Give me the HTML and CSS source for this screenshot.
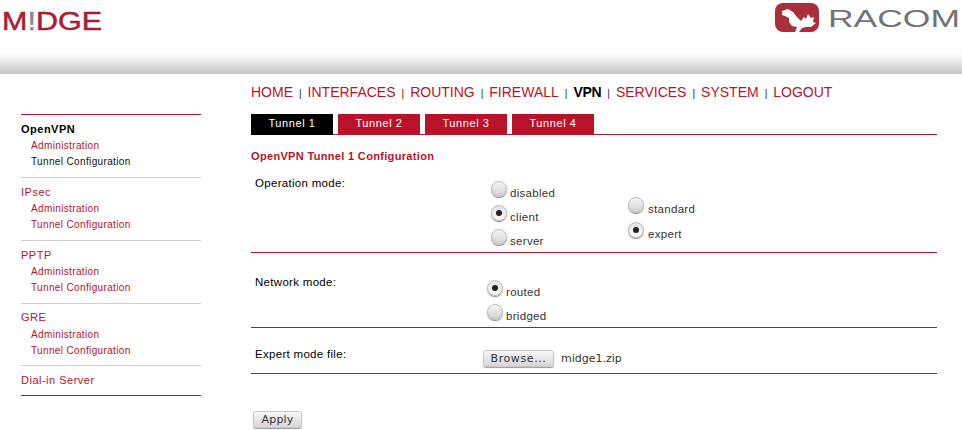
FILE: index.html
```html
<!DOCTYPE html>
<html>
<head>
<meta charset="utf-8">
<title>M!DGE</title>
<link rel="stylesheet" href="styles.css">
</head>
<body>
<header class="top">
  <svg class="logo-midge" width="104" height="38" viewBox="0 0 104 38">
    <text class="midge-text" x="2" y="30" textLength="100" lengthAdjust="spacingAndGlyphs">M<tspan class="bang">!</tspan>DGE</text>
  </svg>
  <div class="logo-racom">
    <svg class="leaf" width="44" height="29" viewBox="0 0 44 29">
      <rect x="0" y="0" width="44" height="29" rx="8" fill="#a92f3a"/>
      <path d="M7 8 L13 6 L18 9 L22 14 L26 18 L29 14 L31 16 L33 11 L36 15 L39 14 L38 19 L41 20 L36 24 L31 24 L27 25 L24 29 L20 29 L22 24 L17 23 L14 19 L14 15 L10 13 L7 12 Z" fill="#fff"/>
    </svg>
    <svg class="racom" width="134" height="30" viewBox="0 0 134 30">
      <text class="racom-text" x="0" y="24" textLength="132" lengthAdjust="spacingAndGlyphs">RACOM</text>
    </svg>
  </div>
</header>
<div class="band"></div>
<div class="page">
  <aside class="side">
    <section class="group">
      <div class="head on">OpenVPN</div>
      <a class="sub">Administration</a>
      <a class="sub on-sub">Tunnel Configuration</a>
    </section>
    <section class="group">
      <div class="head">IPsec</div>
      <a class="sub">Administration</a>
      <a class="sub">Tunnel Configuration</a>
    </section>
    <section class="group">
      <div class="head">PPTP</div>
      <a class="sub">Administration</a>
      <a class="sub">Tunnel Configuration</a>
    </section>
    <section class="group gre">
      <div class="head">GRE</div>
      <a class="sub">Administration</a>
      <a class="sub">Tunnel Configuration</a>
    </section>
    <section class="group last">
      <div class="head">Dial-in Server</div>
    </section>
  </aside>
  <main class="main">
    <nav class="nav">
      <a>HOME</a><i>|</i><a>INTERFACES</a><i>|</i><a>ROUTING</a><i>|</i><a>FIREWALL</a><i>|</i><a class="cur">VPN</a><i>|</i><a>SERVICES</a><i>|</i><a>SYSTEM</a><i>|</i><a>LOGOUT</a>
    </nav>
    <div class="tabs">
      <a class="tab cur-tab">Tunnel 1</a>
      <a class="tab">Tunnel 2</a>
      <a class="tab">Tunnel 3</a>
      <a class="tab">Tunnel 4</a>
    </div>
    <h1 class="title">OpenVPN Tunnel 1 Configuration</h1>
    <div class="row row-op">
      <div class="label">Operation mode:</div>
      <div class="col col-a">
        <div class="opt"><span class="radio"></span><span>disabled</span></div>
        <div class="opt"><span class="radio sel"></span><span>client</span></div>
        <div class="opt"><span class="radio"></span><span>server</span></div>
      </div>
      <div class="col col-b">
        <div class="opt"><span class="radio"></span><span>standard</span></div>
        <div class="opt"><span class="radio sel"></span><span>expert</span></div>
      </div>
    </div>
    <div class="row row-net">
      <div class="label">Network mode:</div>
      <div class="col col-n">
        <div class="opt"><span class="radio sel"></span><span>routed</span></div>
        <div class="opt"><span class="radio"></span><span>bridged</span></div>
      </div>
    </div>
    <div class="row row-file">
      <div class="label">Expert mode file:</div>
      <div class="file"><button class="btn browse">Browse...</button><span class="fname">midge1.zip</span></div>
    </div>
    <button class="btn apply">Apply</button>
  </main>
</div>
</body>
</html>
```
FILE: styles.css
```css
html, body { margin: 0; padding: 0; background: #fff; }
body { font-family: "Liberation Sans", Arial, sans-serif; font-size: 11px; color: #000; width: 962px; height: 430px; overflow: hidden; }

.top { height: 55px; display: flex; justify-content: space-between; align-items: flex-start; }
.logo-midge { display: block; }
.midge-text { font-family: "Liberation Sans", Arial, sans-serif; font-size: 25px; fill: #ab1d34; stroke: #ab1d34; stroke-width: 0.5px; }
.bang { fill: #8c8c8c; stroke: #8c8c8c; }
.logo-racom { display: flex; align-items: flex-start; margin-top: 3px; }
.leaf { display: block; margin-right: 9px; }
.racom { display: block; }
.racom-text { font-family: "Liberation Sans", Arial, sans-serif; font-size: 24px; fill: #737373; }

.band { height: 19px; background: linear-gradient(#fbfbfb, #c2c2c2); }

.page { display: flex; }
.side { width: 180px; margin: 40px 0 0 21px; border-top: 1px solid #b9132a; border-bottom: 1px solid #b9132a; box-sizing: border-box; height: 282px; }
.group { border-bottom: 1px solid #cfcfd4; height: 63px; padding-top: 6px; box-sizing: border-box; display: flex; flex-direction: column; }
.group .head { margin-bottom: 1px; }
.group.gre { height: 62px; padding-top: 5px; }
.group.gre .head { margin-bottom: 2px; }
.group.last { border-bottom: 0; height: auto; }
.head { font-size: 11px; line-height: 16px; color: #b9132a; letter-spacing: 0.5px; }
.head.on { color: #000; font-weight: 700; }
.sub { font-size: 10px; line-height: 16px; color: #b9132a; padding-left: 10px; letter-spacing: 0.36px; }
.sub.on-sub { color: #111; }

.main { width: 686px; margin-left: 50px; }
.nav { margin-top: 9px; height: 21px; line-height: 18px; font-size: 14px; white-space: nowrap; display: flex; }
.nav a { color: #b9132a; }
.nav a.cur { color: #000; font-weight: 700; letter-spacing: -0.3px; }
.nav i { font-style: normal; font-size: 10px; color: #222; margin: 2px 6px 0; }
.tabs { display: flex; gap: 5px; margin-top: 10px; height: 20px; border-bottom: 1px solid #b9132a; }
.tab { width: 82px; height: 20px; background: #b9132a; color: #fff; font-size: 11px; line-height: 19px; text-align: center; letter-spacing: 0.6px; }
.tab.cur-tab { background: #000; height: 21px; }
.title { margin: 14px 0 0; font-size: 11px; line-height: 14px; color: #b9132a; font-weight: 700; letter-spacing: 0.33px; }

.row { display: flex; border-bottom: 1px solid #b9132a; box-sizing: border-box; }
.row-op { height: 78px; margin-top: 12px; }
.row-net { height: 75px; }
.row-file { height: 46px; }
.label { width: 226px; padding: 1px 0 0 4px; box-sizing: border-box; font-size: 11.5px; line-height: 14px; letter-spacing: 0.3px; }
.row-net .label { padding-top: 22px; }
.row-file .label { padding-top: 19px; }
.col { display: flex; flex-direction: column; }
.col-a { margin-left: 14px; width: 137px; padding-top: 6px; gap: 4px; }
.col-b { padding-top: 22px; gap: 5px; }
.col-n { margin-left: 10px; padding-top: 27px; gap: 4px; }
.opt { display: flex; height: 20px; font-size: 11.5px; line-height: 14px; letter-spacing: 0.3px; color: #333; }
.opt span:last-child { padding-top: 5px; }
.radio { width: 16px; height: 16px; border-radius: 50%; margin-right: 3px; box-sizing: border-box; position: relative; background: linear-gradient(#f6f6f6, #cfcfcf); border: 1px solid #bdbdbd; box-shadow: 0 1px 1px #888; }
.col-b .radio { margin-right: 4px; }
.radio.sel { background: linear-gradient(#e4e4e4, #f8f8f8); }
.radio.sel::after { content: ""; position: absolute; left: 4px; top: 4px; width: 6px; height: 6px; border-radius: 50%; background: #222; }

.file { margin-left: 6px; padding-top: 22px; display: flex; align-items: flex-start; }
.btn { font-family: "DejaVu Sans", sans-serif; font-size: 11px; color: #333; height: 17px; padding: 0; border: 1px solid #c8c8c8; border-radius: 3px; background: linear-gradient(#f8f8f8, #d6d6d6); box-shadow: 0 1px 1px #999; line-height: 14px; }
.browse { width: 71px; letter-spacing: 0.6px; }
.fname { font-family: "DejaVu Sans", sans-serif; font-size: 11px; color: #333; margin-left: 7px; line-height: 17px; }
.apply { display: block; width: 49px; margin: 37px 0 0 2px; letter-spacing: 0.2px; }
```
